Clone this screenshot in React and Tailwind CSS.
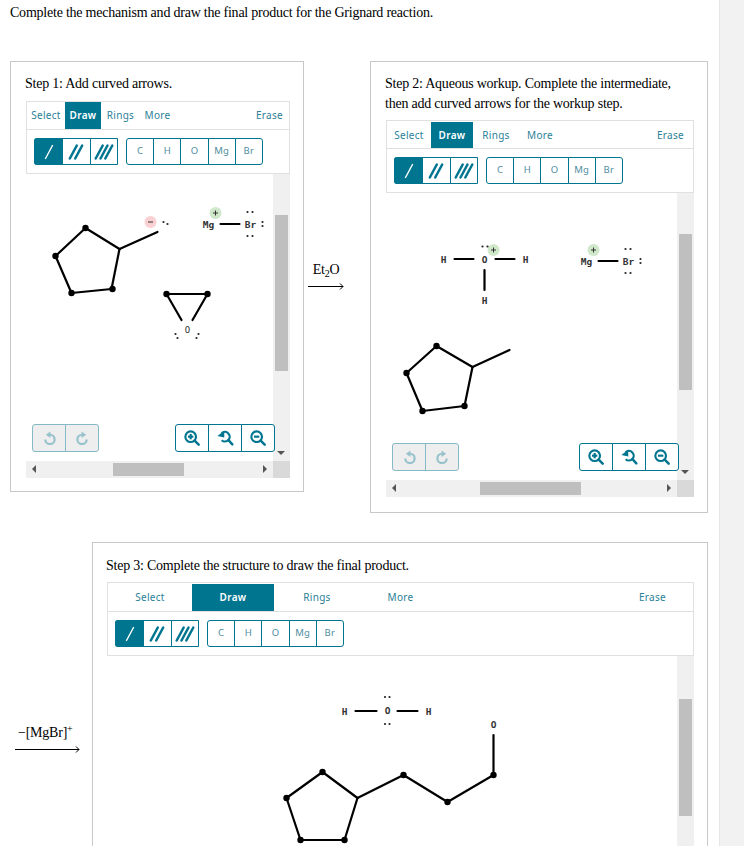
const ui = "font-['Noto_Sans',sans-serif]";
const serif = "font-['Liberation_Serif',serif] tracking-[-0.225px]";

function Line({ a, b }) {
  return <line x1={a[0]} y1={a[1]} x2={b[0]} y2={b[1]} stroke="#000" strokeWidth="2.2" strokeLinecap="round" />;
}

function Chain({ pts, closed, dots = [] }) {
  const all = closed ? [...pts, pts[0]] : pts;
  return (
    <g>
      {all.slice(1).map((p, i) => <Line key={i} a={all[i]} b={p} />)}
      {dots.map((p, i) => <circle key={i} cx={p[0]} cy={p[1]} r="3.2" fill="#000" />)}
    </g>
  );
}

function Atom({ x, y, t }) {
  return (
    <text x={x} y={y + 3.5} textAnchor="middle" fontSize="9.5" fontWeight="700" fontFamily="'DejaVu Sans Mono', monospace" fill="#333">
      {t}
    </text>
  );
}

function Pair({ pts }) {
  return <g>{pts.map((p, i) => <circle key={i} cx={p[0]} cy={p[1]} r="1.1" fill="#222" />)}</g>;
}

function Charge({ x, y, plus }) {
  return (
    <g>
      <circle cx={x} cy={y} r="6" fill={plus ? '#cfe8c9' : '#fbd0d2'} />
      <line x1={x - 2.5} y1={y} x2={x + 2.5} y2={y} stroke="#333" strokeWidth="1" />
      {plus && <line x1={x} y1={y - 2.5} x2={x} y2={y + 2.5} stroke="#333" strokeWidth="1" />}
    </g>
  );
}

function MgBr({ dx, dy }) {
  return (
    <g transform={`translate(${dx} ${dy})`}>
      <Charge x={216} y={213} plus />
      <Atom x={209} y={224} t="Mg" />
      <Line a={[221, 224]} b={[240, 224]} />
      <Atom x={251} y={224} t="Br" />
      <Pair pts={[[248, 212], [253, 212], [248, 236], [253, 236], [263, 222], [263, 226]]} />
    </g>
  );
}

function Drawing1() {
  return (
    <svg viewBox="27 174 246 287" className="w-full h-full block">
      <Chain
        pts={[[56, 256], [86, 228], [120, 249], [112, 289], [72, 293]]}
        closed
        dots={[[86, 228], [56, 256], [72, 293], [113, 289]]}
      />
      <Line a={[120, 249]} b={[158, 232]} />
      <Charge x={151} y={222} />
      <Pair pts={[[164, 222], [168, 224]]} />
      <MgBr dx={0} dy={0} />
      <Chain pts={[[182, 320], [167, 294], [208, 294], [193, 320]]} dots={[[167, 294], [208, 294]]} />
      <text x={188} y={333} textAnchor="middle" fontSize="9" fontFamily="'DejaVu Sans Mono', monospace" fill="#333">O</text>
      <Pair pts={[[176, 334], [178, 338], [199, 334], [197, 338]]} />
    </svg>
  );
}

function Drawing2() {
  return (
    <svg viewBox="387 193 290 287" className="w-full h-full block">
      <Atom x={444} y={259} t="H" />
      <Line a={[455, 259]} b={[474, 259]} />
      <Atom x={485} y={259} t="O" />
      <Line a={[496, 259]} b={[515, 259]} />
      <Atom x={526} y={259} t="H" />
      <Charge x={494} y={250} plus />
      <Pair pts={[[483, 246.5], [488, 246.5]]} />
      <Line a={[485, 270]} b={[485, 290]} />
      <Atom x={485} y={300} t="H" />
      <MgBr dx={378} dy={37} />
      <Chain
        pts={[[407, 373], [437, 346], [473, 367], [465, 406], [423, 411]]}
        closed
        dots={[[437, 346], [407, 373], [423, 411], [465, 406]]}
      />
      <Line a={[473, 367]} b={[510, 350]} />
    </svg>
  );
}

function Drawing3() {
  return (
    <svg viewBox="108 656 569 300" className="w-full h-[300px] block">
      <Atom x={345} y={711} t="H" />
      <Line a={[356, 711]} b={[377, 711]} />
      <Atom x={388} y={710} t="O" />
      <Line a={[398, 711]} b={[418, 711]} />
      <Atom x={429} y={711} t="H" />
      <Pair pts={[[385.5, 697], [390, 697], [385.5, 724], [390, 724]]} />
      <Chain
        pts={[[287, 798], [323, 772], [358, 798], [345, 840], [301, 840]]}
        closed
        dots={[[323, 772], [287, 798], [301, 840], [345, 840]]}
      />
      <Chain pts={[[358, 798], [404, 775], [448, 802], [494, 775], [494, 735]]} dots={[[404, 775], [448, 802], [494, 775]]} />
      <Atom x={494} y={724} t="O" />
    </svg>
  );
}

function BondIcon({ n }) {
  const offsets = n === 1 ? [0] : n === 2 ? [-2.7, 2.7] : [-4.8, 0, 4.8];
  return (
    <svg width="20" height="20" viewBox="0 0 20 20">
      {offsets.map((o) => (
        <line key={o} x1={6.5 + o} y1={16.5} x2={13.5 + o} y2={3.5} stroke="currentColor" strokeWidth={n === 1 ? 1.4 : 2.5} strokeLinecap="round" />
      ))}
    </svg>
  );
}

function ButtonRow() {
  return (
    <div className="flex gap-2">
      <div className="flex w-[84px] h-[27px] rounded-l-[3px] border border-[#007590] text-[#007590]">
        <div className="w-[29px] -m-px mr-0 rounded-l-[3px] bg-[#007590] text-white flex items-center justify-center"><BondIcon n={1} /></div>
        <div className="flex-1 border-r border-[#007590] flex items-center justify-center"><BondIcon n={2} /></div>
        <div className="flex-1 flex items-center justify-center"><BondIcon n={3} /></div>
      </div>
      <div className={`flex w-[137px] h-[27px] rounded-[3px] border border-[#007590] text-[#4f8da0] text-[9.5px] ${ui}`}>
        {['C', 'H', 'O', 'Mg', 'Br'].map((t, i) => (
          <div key={t} className={`flex-1 flex items-center justify-center ${i < 4 ? 'border-r border-[#007590]' : ''}`}>{t}</div>
        ))}
      </div>
    </div>
  );
}

function Toolbar({ tabs, rowClass, eraseClass }) {
  return (
    <div className={`border border-[#e0e0e0] text-[#2b8198] text-[10px] tracking-[0.3px] ${ui}`}>
      <div className={`flex items-end border-b border-[#e0e0e0] ${rowClass}`}>
        {tabs.map((tab) => (
          <div
            key={tab.label}
            className={`h-full flex items-center justify-center ${tab.cls} ${tab.active ? 'bg-[#007590] text-white font-semibold' : ''}`}
          >
            {tab.label}
          </div>
        ))}
        <div className={`ml-auto h-full flex items-center ${eraseClass}`}>Erase</div>
      </div>
      <div className="h-[43px] pt-2 pl-[7px]">
        <ButtonRow />
      </div>
    </div>
  );
}

function Lens({ kind }) {
  return (
    <svg width="16" height="16" viewBox="0 0 18 18" fill="none" stroke="#007590" strokeWidth="2.4">
      <circle cx="7.5" cy="7.5" r="6" />
      <line x1="12" y1="12" x2="16.5" y2="16.5" strokeWidth="2.8" strokeLinecap="round" />
      <line x1="4.5" y1="7.5" x2="10.5" y2="7.5" />
      {kind === 'plus' && <line x1="7.5" y1="4.5" x2="7.5" y2="10.5" />}
    </svg>
  );
}

function ResetLens() {
  return (
    <svg width="17" height="16" viewBox="0 0 20 18" fill="none" stroke="#007590" strokeWidth="2.6">
      <path d="M5.5 3.4 A5.6 5.6 0 1 1 5.5 11.6" />
      <path d="M0.5 6.5 L8.5 0.5 L8.5 8.5 Z" fill="#007590" stroke="none" />
      <line x1="13.5" y1="11.5" x2="18" y2="16.5" strokeWidth="2.8" strokeLinecap="round" />
    </svg>
  );
}

function HistoryIcon({ flip }) {
  return (
    <svg width="13" height="14" viewBox="0 0 14 14" fill="none" className={flip ? '-scale-x-100' : ''}>
      <path d="M2.5 8.5 A5 5 0 1 0 7.5 3.5" stroke="currentColor" strokeWidth="2.4" />
      <path d="M8 0 L3 3.5 L8 7 Z" fill="currentColor" />
    </svg>
  );
}

function Overlay() {
  return (
    <>
      <div className="absolute left-[6px] top-[250px] flex w-[67px] h-[28px] rounded-[3px] border border-[#85b9c6] bg-[#eeeeee] text-[#98c3cd]">
        <div className="flex-1 border-r border-[#85b9c6] flex items-center justify-center"><HistoryIcon /></div>
        <div className="flex-1 flex items-center justify-center"><HistoryIcon flip /></div>
      </div>
      <div className="absolute right-[-2px] top-[250px] z-10 flex w-[100px] h-[28px] rounded-[3px] border border-[#007590] bg-white">
        <div className="flex-1 border-r border-[#007590] flex items-center justify-center"><Lens kind="plus" /></div>
        <div className="flex-1 border-r border-[#007590] flex items-center justify-center"><ResetLens /></div>
        <div className="flex-1 flex items-center justify-center"><Lens kind="minus" /></div>
      </div>
    </>
  );
}

function VScroll({ thumbClass, arrow }) {
  return (
    <div className="w-[17px] shrink-0 bg-[#f0f0f0] flex flex-col">
      <div className={`ml-[2px] w-[13px] bg-[#bfbfbf] ${thumbClass}`} />
      {arrow && <div className="mt-auto mb-[6px] ml-[4px] w-0 h-0 border-x-[4px] border-x-transparent border-t-[4px] border-t-[#555]" />}
    </div>
  );
}

function HScroll({ thumbClass }) {
  return (
    <div className="flex h-[17px]">
      <div className="flex-1 relative bg-[#f0f0f0] flex items-center">
        <div className={`h-[13px] bg-[#bfbfbf] ${thumbClass}`} />
        <div className="absolute left-[6px] top-[4px] w-0 h-0 border-y-[4px] border-y-transparent border-r-[4px] border-r-[#555]" />
        <div className="absolute right-[6px] top-[4px] w-0 h-0 border-y-[4px] border-y-transparent border-l-[4px] border-l-[#555]" />
      </div>
      <div className="w-[17px] bg-[#d9d9d9]" />
    </div>
  );
}

function ArrowLine({ width }) {
  return (
    <svg width={width} height="7" viewBox={`0 0 ${width} 7`} className="block">
      <path d={`M0 3.5 H${width - 1} M${width - 4} 0.5 L${width - 1} 3.5 L${width - 4} 6.5`} stroke="#000" fill="none" strokeWidth="1" />
    </svg>
  );
}

const tabs1 = [
  { label: 'Select', cls: 'w-[38px]' },
  { label: 'Draw', cls: 'w-[36px]', active: true },
  { label: 'Rings', cls: 'w-[39px]' },
  { label: 'More', cls: 'w-[35px]' },
];
const tabs2 = [
  { label: 'Select', cls: 'w-[44px]' },
  { label: 'Draw', cls: 'w-[42px]', active: true },
  { label: 'Rings', cls: 'w-[46px]' },
  { label: 'More', cls: 'w-[42px]' },
];
const tabs3 = [
  { label: 'Select', cls: 'w-[84px]' },
  { label: 'Draw', cls: 'w-[82px]', active: true },
  { label: 'Rings', cls: 'w-[86px]' },
  { label: 'More', cls: 'w-[81px]' },
];

export default function App() {
  return (
    <div className="flex w-[744px] h-[846px] overflow-hidden bg-white text-black">
      <div className="w-[719px] shrink-0">
        <p className={`pl-[10px] pt-[3px] h-[61px] text-[14px] leading-[20px] ${serif}`}>
          Complete the mechanism and draw the final product for the Grignard reaction.
        </p>

        {/* Steps 1 + 2 */}
        <div className="flex items-start pl-[10px]">
          <div className="w-[294px] h-[431px] border border-[#c8c8c8] pt-[12px] pl-[15px]">
            <p className={`-ml-px mb-[7px] text-[14px] leading-[20px] ${serif}`}>Step 1: Add curved arrows.</p>
            <div className="w-[264px]">
              <Toolbar tabs={tabs1} rowClass="h-[28px]" eraseClass="pr-[6px]" />
              <div className="flex h-[287px]">
                <div className="flex-1 relative">
                  <Drawing1 />
                  <Overlay />
                </div>
                <VScroll thumbClass="mt-[41px] h-[156px]" arrow />
              </div>
              <HScroll thumbClass="ml-[87px] w-[71px]" />
            </div>
          </div>

          <div className="w-[66px] pl-[4px] pt-[201px]">
            <p className={`mb-[5px] text-center w-[36px] text-[14px] leading-[16px] whitespace-nowrap ${serif}`}>
              Et<sub className="text-[10px]">2</sub>O
            </p>
            <ArrowLine width={36} />
          </div>

          <div className="w-[338px] h-[452px] border border-[#c8c8c8] pt-[12px] pl-[15px]">
            <p className={`-ml-px mb-[6px] text-[14px] leading-[20px] ${serif}`}>
              Step 2: Aqueous workup. Complete the intermediate,<br />then add curved arrows for the workup step.
            </p>
            <div className="w-[308px]">
              <Toolbar tabs={tabs2} rowClass="h-[28px] pt-px" eraseClass="pr-[9px]" />
              <div className="flex h-[287px]">
                <div className="flex-1 relative">
                  <Drawing2 />
                  <Overlay />
                </div>
                <VScroll thumbClass="mt-[41px] h-[156px]" arrow />
              </div>
              <HScroll thumbClass="ml-[94px] w-[101px]" />
            </div>
          </div>
        </div>

        {/* Step 3 */}
        <div className="flex items-start mt-[29px] pl-[15px]">
          <div className="w-[77px] pt-[181px]">
            <p className={`pl-[3px] mb-[3px] text-[14px] leading-[20px] whitespace-nowrap ${serif}`}>
              −[MgBr]<sup className="text-[10px]">+</sup>
            </p>
            <ArrowLine width={65} />
          </div>
          <div className="w-[616px] h-[400px] border border-[#c8c8c8] pt-[13px] pl-[14px]">
            <p className={`-ml-px mb-[6px] text-[14px] leading-[20px] ${serif}`}>
              Step 3: Complete the structure to draw the final product.
            </p>
            <div className="w-[587px]">
              <Toolbar tabs={tabs3} rowClass="h-[29px] pt-px" eraseClass="pr-[27px]" />
              <div className="flex h-[300px]">
                <div className="flex-1">
                  <Drawing3 />
                </div>
                <VScroll thumbClass="mt-[43px] h-[117px]" />
              </div>
            </div>
          </div>
        </div>
      </div>
      <div className="flex-1 bg-[#f2f2f2] border-l border-[#e6e6e6]" />
    </div>
  );
}
